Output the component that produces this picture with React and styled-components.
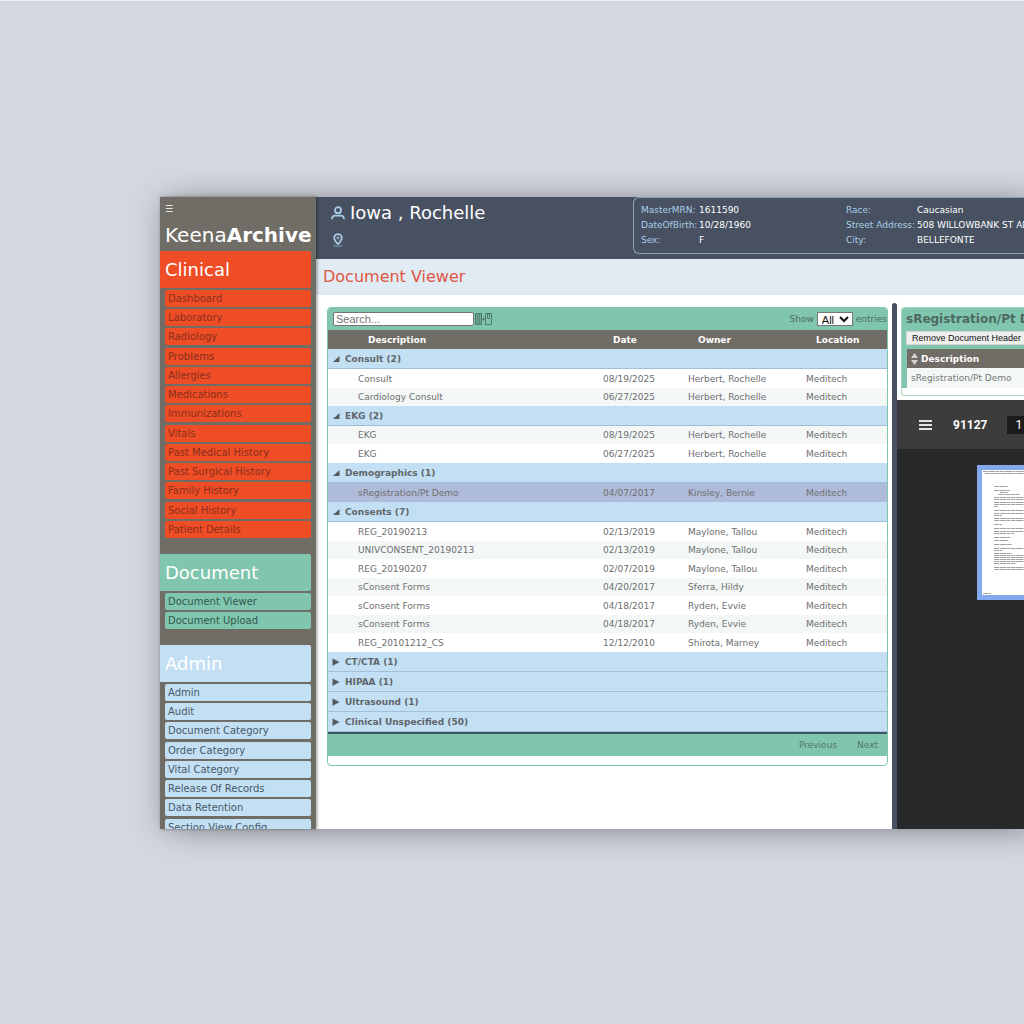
import React, { useState } from 'react';
import styled, { createGlobalStyle } from 'styled-components';

const colors = {
  page: '#d4d7e0',
  stone: '#706c66',
  navy: '#475161',
  orange: '#ee4d26',
  green: '#80c5ad',
  sky: '#c3dff4',
  text: '#6e6e6e',
};

const GlobalStyle = createGlobalStyle`
  * {
    box-sizing: border-box;
  }

  body {
    margin: 0;
    background: ${colors.page};
    font-family: 'DejaVu Sans', sans-serif;
    font-size: 9px;
    color: ${colors.text};
  }

  button, input, select {
    font-family: inherit;
    font-size: inherit;
    color: inherit;
  }
`;

const Page = styled.div`
  display: flex;
  height: 100vh;
  padding: 196px 0 195px 160px;
  overflow: hidden;
  border-top: 1px solid #eef0f5;
`;

const Window = styled.div`
  display: flex;
  flex: 1;
  min-width: 0;
  background: #fff;
  box-shadow: 0 2px 26px rgba(80, 80, 84, 0.4), 26px 2px 26px rgba(80, 80, 84, 0.25);
`;

const Sidebar = styled.nav`
  flex: 0 0 156px;
  padding-right: 5px;
  overflow: hidden;
  background: ${colors.stone};
  box-shadow: 1px 0 3px rgba(0, 0, 0, 0.4);
  z-index: 1;
`;

const MenuButton = styled.button`
  display: block;
  height: 24px;
  padding: 0 5px;
  border: 0;
  background: none;
  color: #fff;
  font-size: 9px;
  line-height: 24px;
`;

const Brand = styled.div`
  height: 30px;
  padding-left: 5px;
  color: #fff;
  font-size: 20px;
  line-height: 28px;
  white-space: nowrap;
`;

const SectionTitle = styled.h2`
  height: 37px;
  margin: 0 0 2px;
  padding-left: 5px;
  border-radius: 0 2px 2px 0;
  background: ${({ $color }) => $color};
  color: #fff;
  font-size: 18px;
  font-weight: 400;
  line-height: 37px;
`;

const SectionList = styled.ul`
  display: grid;
  gap: 2px;
  margin: 0 0 16px;
  padding: 0 0 0 5px;
  list-style: none;
`;

const SectionItem = styled.li`
  &:nth-child(4n) {
    padding-top: 1px;
  }
`;

const SectionLink = styled.a`
  display: block;
  height: 17px;
  padding-left: 3px;
  border-radius: 2px;
  background: ${({ $color }) => $color};
  color: ${({ $text }) => $text};
  font-size: 10px;
  line-height: 17px;
  text-decoration: none;
  white-space: nowrap;
`;

const Main = styled.main`
  display: flex;
  flex: 1;
  flex-direction: column;
  min-width: 0;
  overflow: hidden;
`;

const Header = styled.header`
  display: grid;
  grid-template-columns: 317px minmax(0, 1fr);
  flex: 0 0 62px;
  overflow: hidden;
  background: ${colors.navy};
`;

const Patient = styled.div`
  display: flex;
  flex-direction: column;
  gap: 8px;
  padding: 4px 0 0 15px;
`;

const PatientName = styled.div`
  display: flex;
  align-items: center;
  gap: 5px;
  color: #fff;
  font-size: 18px;
  line-height: 24px;
  white-space: nowrap;
`;

const PatientInfo = styled.dl`
  display: grid;
  grid-template-columns: 58px 147px 71px 1fr;
  grid-auto-rows: 15px;
  align-content: start;
  height: 57px;
  margin: 0;
  padding: 5px 0 0 7px;
  border: 1px solid #8e9fb1;
  border-right: 0;
  border-radius: 6px 0 0 6px;
  line-height: 15px;
  white-space: nowrap;
`;

const InfoLabel = styled.dt`
  color: #a9cde6;
`;

const InfoValue = styled.dd`
  margin: 0;
  color: #fff;
`;

const PageTitle = styled.h1`
  flex: 0 0 35px;
  margin: 0;
  padding-left: 7px;
  background: #e1ebf4;
  color: #df5640;
  font-size: 16px;
  font-weight: 400;
  line-height: 36px;
`;

const Workspace = styled.div`
  display: grid;
  grid-template-columns: minmax(0, 576fr) 5px minmax(0, 127fr);
  flex: 1;
  min-height: 0;
  padding-top: 8px;
`;

const Splitter = styled.div`
  border-radius: 3px 3px 0 0;
  background: ${colors.navy};
`;

const ListPane = styled.section`
  padding: 4px 4px 0 11px;
`;

const Card = styled.div`
  padding-bottom: 9px;
  border: 1px solid ${colors.green};
  border-radius: 4px;
  overflow: hidden;
`;

const Toolbar = styled.div`
  display: flex;
  align-items: center;
  height: 22px;
  padding-left: 5px;
  background: ${colors.green};
`;

const SearchInput = styled.input`
  width: 141px;
  height: 14px;
  margin-right: 1px;
  padding: 0 2px;
  border: 1px solid #767676;
  border-radius: 2px;
  font-family: 'Liberation Sans', sans-serif;
  font-size: 11px;
`;

const LengthLabel = styled.label`
  display: flex;
  align-items: center;
  gap: 3px;
  margin-left: auto;
  color: #4f6b62;
`;

const LengthSelect = styled.select`
  width: 36px;
  height: 14px;
  padding: 0;
  border: 1px solid #767676;
  background: #fff;
  color: #111;
  font-family: 'Liberation Sans', sans-serif;
  font-size: 11px;
  line-height: 12px;
`;

const Table = styled.table`
  width: 100%;
  border-collapse: separate;
  border-spacing: 0;
  table-layout: fixed;
  white-space: nowrap;
`;

const Col = styled.col`
  width: ${({ $width }) => $width || 'auto'};
`;

const HeadCell = styled.th`
  height: 19px;
  padding: 0 0 0 40px;
  background: ${colors.stone};
  color: #fff;
  text-align: left;
`;

const GroupCell = styled.th`
  height: 20px;
  padding: 0;
  border-bottom: 1px solid #a3bfd6;
  background: ${colors.sky};
  text-align: left;
`;

const GroupButton = styled.button`
  display: flex;
  align-items: center;
  gap: 5px;
  height: 19px;
  padding: 0 0 0 4px;
  border: 0;
  background: none;
  color: #5f6669;
  font-weight: 700;
`;

const Row = styled.tr`
  height: ${({ $shaded }) => ($shaded ? '18px' : '19px')};
  background: ${({ $shaded, $selected }) => ($selected ? '#afbcd9' : $shaded ? '#f3f8f7' : '#fff')};
`;

const Cell = styled.td`
  padding: 0 0 0 30px;
`;

const Pager = styled.div`
  display: flex;
  justify-content: flex-end;
  gap: 20px;
  height: 24px;
  padding-right: 9px;
  border-top: 2px solid #3f5663;
  background: ${colors.green};
`;

const PagerButton = styled.button`
  padding: 0;
  border: 0;
  background: none;
  color: #57756c;
`;

const DocPane = styled.section`
  display: flex;
  flex-direction: column;
  min-width: 0;
  overflow: hidden;
`;

const DocCard = styled.div`
  flex: 0 0 89px;
  margin: 4px 0 4px 4px;
  border: 1px solid #a5d5c4;
  border-right: 0;
  border-radius: 4px 0 0 4px;
  overflow: hidden;
`;

const DocBody = styled.div`
  height: 80px;
  padding-left: 4px;
  background: ${colors.green};
`;

const DocTitle = styled.h3`
  height: 23px;
  margin: 0;
  color: #4c6a62;
  font-size: 12px;
  line-height: 22px;
  white-space: nowrap;
`;

const HeaderButton = styled.button`
  display: block;
  width: 122px;
  height: 14px;
  padding: 0 5px;
  border: 1px solid #d5d5d5;
  background: #efefef;
  color: #111;
  font-family: 'Liberation Sans', sans-serif;
  text-align: left;
  white-space: nowrap;
`;

const DocTable = styled.table`
  width: 100%;
  margin-top: 4px;
  padding-left: 1px;
  border-collapse: separate;
  border-spacing: 0;
  white-space: nowrap;
`;

const DocHeadCell = styled.th`
  height: 19px;
  padding: 0 4px;
  background: ${colors.stone};
  color: #fff;
  text-align: left;
`;

const DocHeadLabel = styled.span`
  display: flex;
  align-items: center;
  gap: 3px;
`;

const DocCell = styled.td`
  height: 20px;
  padding: 0 4px;
  background: #f3f8f7;
  color: #777;
`;

const PdfToolbar = styled.div`
  display: flex;
  align-items: center;
  flex: 0 0 49px;
  padding-left: 22px;
  background: #3c3c3c;
  color: #fff;
  font-family: Roboto, sans-serif;
  font-size: 12px;

  > * {
    flex-shrink: 0;
  }
`;

const PdfName = styled.span`
  margin: 0 20px 0 21px;
  font-weight: 700;
`;

const PageInput = styled.input`
  width: 32px;
  height: 18px;
  padding: 0 8px;
  border: 0;
  background: #1c1c1c;
  color: #fff;
`;

const PdfBody = styled.div`
  flex: 1;
  min-height: 0;
  padding: 16px 0 0 80px;
  background: #28292b;
`;

const Thumbnail = styled.div`
  width: 106px;
  height: 135px;
  border: 5px solid #84a8ee;
  background: #fff;
`;

const navSections = [
  {
    title: 'Clinical',
    color: colors.orange,
    text: '#8a2f1c',
    items: [
      'Dashboard', 'Laboratory', 'Radiology', 'Problems', 'Allergies', 'Medications', 'Immunizations', 'Vitals',
      'Past Medical History', 'Past Surgical History', 'Family History', 'Social History', 'Patient Details',
    ],
  },
  {
    title: 'Document',
    color: colors.green,
    text: '#33594e',
    items: ['Document Viewer', 'Document Upload'],
  },
  {
    title: 'Admin',
    color: colors.sky,
    text: '#465968',
    items: [
      'Admin', 'Audit', 'Document Category', 'Order Category', 'Vital Category', 'Release Of Records',
      'Data Retention', 'Section View Config',
    ],
  },
];

const patientInfo = [
  ['MasterMRN:', '1611590'],
  ['Race:', 'Caucasian'],
  ['DateOfBirth:', '10/28/1960'],
  ['Street Address:', '508 WILLOWBANK ST APT 2'],
  ['Sex:', 'F'],
  ['City:', 'BELLEFONTE'],
];

const groups = [
  {
    name: 'Consult',
    count: 2,
    rows: [
      ['Consult', '08/19/2025', 'Herbert, Rochelle'],
      ['Cardiology Consult', '06/27/2025', 'Herbert, Rochelle'],
    ],
  },
  {
    name: 'EKG',
    count: 2,
    rows: [
      ['EKG', '08/19/2025', 'Herbert, Rochelle'],
      ['EKG', '06/27/2025', 'Herbert, Rochelle'],
    ],
    shadeFirst: true,
  },
  {
    name: 'Demographics',
    count: 1,
    rows: [['sRegistration/Pt Demo', '04/07/2017', 'Kinsley, Bernie']],
  },
  {
    name: 'Consents',
    count: 7,
    rows: [
      ['REG_20190213', '02/13/2019', 'Maylone, Tallou'],
      ['UNIVCONSENT_20190213', '02/13/2019', 'Maylone, Tallou'],
      ['REG_20190207', '02/07/2019', 'Maylone, Tallou'],
      ['sConsent Forms', '04/20/2017', 'Sferra, Hildy'],
      ['sConsent Forms', '04/18/2017', 'Ryden, Evvie'],
      ['sConsent Forms', '04/18/2017', 'Ryden, Evvie'],
      ['REG_20101212_CS', '12/12/2010', 'Shirota, Marney'],
    ],
  },
  { name: 'CT/CTA', count: 1, rows: [] },
  { name: 'HIPAA', count: 1, rows: [] },
  { name: 'Ultrasound', count: 1, rows: [] },
  { name: 'Clinical Unspecified', count: 50, rows: [] },
];

const PersonIcon = () => (
  <svg width="14" height="14" viewBox="0 0 14 14" fill="none" stroke="#a9cbe6" strokeWidth="1.8">
    <circle cx="7" cy="4.2" r="3" />
    <path d="M1 13.2c0-2.4 1.2-3.6 3.2-3.6h5.600c2 0 3.200 1.200 3.200 3.600" />
  </svg>
);

const PinIcon = () => (
  <svg width="14" height="14" viewBox="0 0 14 14" fill="none" stroke="#a9cbe6" strokeWidth="1.8">
    <path d="M7 11.200C4.500 8.500 3.200 7 3.200 4.900a3.800 3.800 0 0 1 7.600 0C10.800 7 9.500 8.500 7 11.200z" />
    <circle cx="7" cy="4.900" r="1" strokeWidth="1" />
    <path d="M3.500 12c-2 1 0 1.300 3.500 1.300s5.500-.3 3.500-1.300" strokeWidth="1" opacity=".6" />
  </svg>
);

const ExpandIcon = () => (
  <svg width="17" height="12" viewBox="0 0 17 12" fill="none" stroke="#4f7b6d" strokeWidth="1">
    <path d="M.5.5h6v11h-6z" fill="#69a592" />
    <path d="M2.500.5v11M4.500.5v11" opacity=".6" />
    <path d="M7 6h4M8.500 4.500v3M10.500.5h6v11h-6zM12.500 1v4.500h2V1z" />
  </svg>
);

const SortIcon = () => (
  <svg width="7" height="12" viewBox="0 0 7 12" fill="#d6d4d0">
    <path d="M3.500 0L7 5H0zM3.500 12L0 7h7z" />
  </svg>
);

const ToggleIcon = ({ open }) => (
  <svg width="8" height="8" viewBox="0 0 8 8" fill="#555c60">
    <path d={open ? 'M7.500 1v6H1z' : 'M.5.5L7.500 4 .5 8z'} />
  </svg>
);

const BarsIcon = () => (
  <svg width="13" height="10" viewBox="0 0 13 10" fill="#e4e4e4">
    <path d="M0 0h13v2H0zM0 4h13v2H0zM0 8h13v2H0z" />
  </svg>
);

// [y, x, width] of each printed line on the page preview
const previewLines = [
  [1, 1, 90], [3, 3, 80], [16, 12, 14], [20, 12, 16], [22, 18, 8], [24, 16, 22], [27, 12, 60], [29, 12, 44],
  [32, 12, 60], [34, 12, 58], [36, 12, 4], [40, 12, 60], [43, 12, 60], [45, 12, 8], [48, 12, 60], [50, 12, 60],
  [54, 12, 8], [58, 12, 60], [61, 12, 60], [63, 12, 20], [67, 12, 16], [70, 12, 14], [74, 12, 18], [78, 12, 60],
  [80, 12, 8], [83, 12, 18], [85, 12, 60], [87, 12, 60], [89, 12, 60], [91, 12, 60], [93, 12, 22], [97, 12, 30],
  [99, 12, 60], [123, 1, 8],
];

const PagePreview = () => (
  <svg width="96" height="125" viewBox="0 0 96 125" stroke="#a2a2a2" strokeDasharray="5 .5 7 .5 3 .5">
    {previewLines.map(([y, x, width]) => (
      <path key={y} d={`M${x} ${y + 0.5}h${width}`} />
    ))}
  </svg>
);

const NavSection = ({ title, color, text, items }) => (
  <>
    <SectionTitle $color={color}>{title}</SectionTitle>
    <SectionList>
      {items.map((item) => (
        <SectionItem key={item}>
          <SectionLink href="#" $color={color} $text={text}>{item}</SectionLink>
        </SectionItem>
      ))}
    </SectionList>
  </>
);

const DocumentGroup = ({ name, count, rows, shadeFirst }) => {
  const [open, setOpen] = useState(rows.length > 0);

  return (
    <tbody>
      <tr>
        <GroupCell colSpan={4}>
          <GroupButton type="button" aria-expanded={open} onClick={() => setOpen(!open)}>
            <ToggleIcon open={open} />
            {name} ({count})
          </GroupButton>
        </GroupCell>
      </tr>
      {open && rows.map(([description, date, owner], i) => (
        <Row
          key={`${description}-${i}`}
          $shaded={i % 2 === (shadeFirst ? 0 : 1)}
          $selected={description === 'sRegistration/Pt Demo'}
        >
          <Cell>{description}</Cell>
          <Cell>{date}</Cell>
          <Cell>{owner}</Cell>
          <Cell>Meditech</Cell>
        </Row>
      ))}
    </tbody>
  );
};

const DocumentList = () => (
  <ListPane>
    <Card>
      <Toolbar>
        <SearchInput type="search" placeholder="Search..." aria-label="Search documents" />
        <ExpandIcon />
        <LengthLabel>
          Show
          <LengthSelect defaultValue="All">
            <option>All</option>
            <option>10</option>
            <option>25</option>
          </LengthSelect>
          entries
        </LengthLabel>
      </Toolbar>
      <Table>
        <colgroup>
          <Col />
          <Col $width="85px" />
          <Col $width="118px" />
          <Col $width="111px" />
        </colgroup>
        <thead>
          <tr>
            <HeadCell>Description</HeadCell>
            <HeadCell>Date</HeadCell>
            <HeadCell>Owner</HeadCell>
            <HeadCell>Location</HeadCell>
          </tr>
        </thead>
        {groups.map((group) => (
          <DocumentGroup key={group.name} {...group} />
        ))}
      </Table>
      <Pager>
        <PagerButton type="button">Previous</PagerButton>
        <PagerButton type="button">Next</PagerButton>
      </Pager>
    </Card>
  </ListPane>
);

const DocumentPreview = () => (
  <DocPane>
    <DocCard>
      <DocBody>
        <DocTitle>sRegistration/Pt Demo</DocTitle>
        <HeaderButton type="button">Remove Document Header</HeaderButton>
        <DocTable>
          <thead>
            <tr>
              <DocHeadCell>
                <DocHeadLabel>
                  <SortIcon />
                  Description
                </DocHeadLabel>
              </DocHeadCell>
            </tr>
          </thead>
          <tbody>
            <tr>
              <DocCell>sRegistration/Pt Demo</DocCell>
            </tr>
          </tbody>
        </DocTable>
      </DocBody>
    </DocCard>
    <PdfToolbar>
      <BarsIcon />
      <PdfName>91127</PdfName>
      <PageInput defaultValue="1" aria-label="Page number" />
    </PdfToolbar>
    <PdfBody>
      <Thumbnail>
        <PagePreview />
      </Thumbnail>
    </PdfBody>
  </DocPane>
);

const App = () => (
  <>
    <GlobalStyle />
    <Page>
      <Window>
        <Sidebar>
          <MenuButton type="button" aria-label="Toggle menu">☰</MenuButton>
          <Brand>Keena<b>Archive</b></Brand>
          {navSections.map((section) => (
            <NavSection key={section.title} {...section} />
          ))}
        </Sidebar>
        <Main>
          <Header>
            <Patient>
              <PatientName>
                <PersonIcon />
                Iowa , Rochelle
              </PatientName>
              <PinIcon />
            </Patient>
            <PatientInfo>
              {patientInfo.map(([label, value]) => (
                <React.Fragment key={label}>
                  <InfoLabel>{label}</InfoLabel>
                  <InfoValue>{value}</InfoValue>
                </React.Fragment>
              ))}
            </PatientInfo>
          </Header>
          <PageTitle>Document Viewer</PageTitle>
          <Workspace>
            <DocumentList />
            <Splitter />
            <DocumentPreview />
          </Workspace>
        </Main>
      </Window>
    </Page>
  </>
);

export default App;
